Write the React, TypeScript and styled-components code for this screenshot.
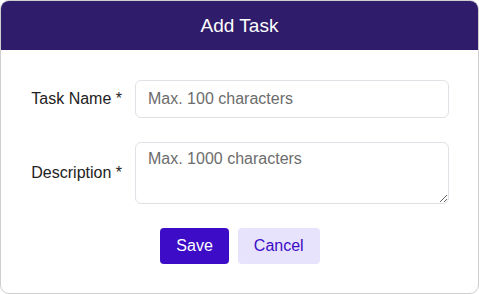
import React from "react";
import styled, { createGlobalStyle } from "styled-components";

const GlobalStyle = createGlobalStyle`
    html, body {
        margin: 0;
        padding: 0;
        background: #ffffff;
        font-family: "Liberation Sans", Arial, sans-serif;
    }
    * {
        box-sizing: border-box;
    }
`

const Card = styled.div`
    width: 479px;
    height: 294px;
    border: 1px solid #cfcfcf;
    border-radius: 9px;
    overflow: hidden;
    background: #ffffff;
`
const Header = styled.div`
    height: 49px;
    background-color: #2f1c6a;
    color: #ffffff;
    font-size: 19px;
    display: flex;
    align-items: center;
    justify-content: center;
`
const Form = styled.form`
    display: grid;
    grid-template-columns: 121px 314px 1fr;
    column-gap: 13px;
    row-gap: 24px;
    align-items: center;
    padding-top: 30px;
`
const Label = styled.label`
    text-align: right;
    font-size: 16px;
    color: #222222;
`
const Field = styled.input`
    height: 38px;
    width: 314px;
    border: 1px solid #dee2e6;
    border-radius: 6px;
    padding: 0 12px;
    font-family: inherit;
    font-size: 16px;
    color: #222222;
    outline: none;
    &::placeholder {
        color: #6c6c6c;
    }
`
const Area = styled.textarea`
    height: 62px;
    width: 314px;
    border: 1px solid #dee2e6;
    border-radius: 6px;
    padding: 7px 12px;
    font-family: inherit;
    font-size: 16px;
    color: #222222;
    outline: none;
    resize: vertical;
    display: block;
    &::placeholder {
        color: #6c6c6c;
    }
`
const Actions = styled.div`
    grid-column: 1 / -1;
    display: flex;
    justify-content: center;
    gap: 9px;
    padding-left: 1px;
`
const Button = styled.button<{ $primary?: boolean }>`
    height: 36px;
    padding: 0 16px;
    border: none;
    border-radius: 4px;
    font-family: inherit;
    font-size: 16px;
    cursor: pointer;
    background-color: ${props => props.$primary ? '#3c0cc6' : '#e8e3fd'};
    color: ${props => props.$primary ? '#ffffff' : '#3c0cc6'};
`

export default function App() {
    return (
        <>
            <GlobalStyle />
            <Card>
                <Header>Add Task</Header>
                <Form onSubmit={e => e.preventDefault()}>
                    <Label htmlFor="task-name">Task Name *</Label>
                    <Field id="task-name" placeholder="Max. 100 characters" />
                    <span />
                    <Label htmlFor="task-desc">Description *</Label>
                    <Area id="task-desc" placeholder="Max. 1000 characters" />
                    <span />
                    <Actions>
                        <Button $primary type="submit">Save</Button>
                        <Button type="button">Cancel</Button>
                    </Actions>
                </Form>
            </Card>
        </>
    )
}
